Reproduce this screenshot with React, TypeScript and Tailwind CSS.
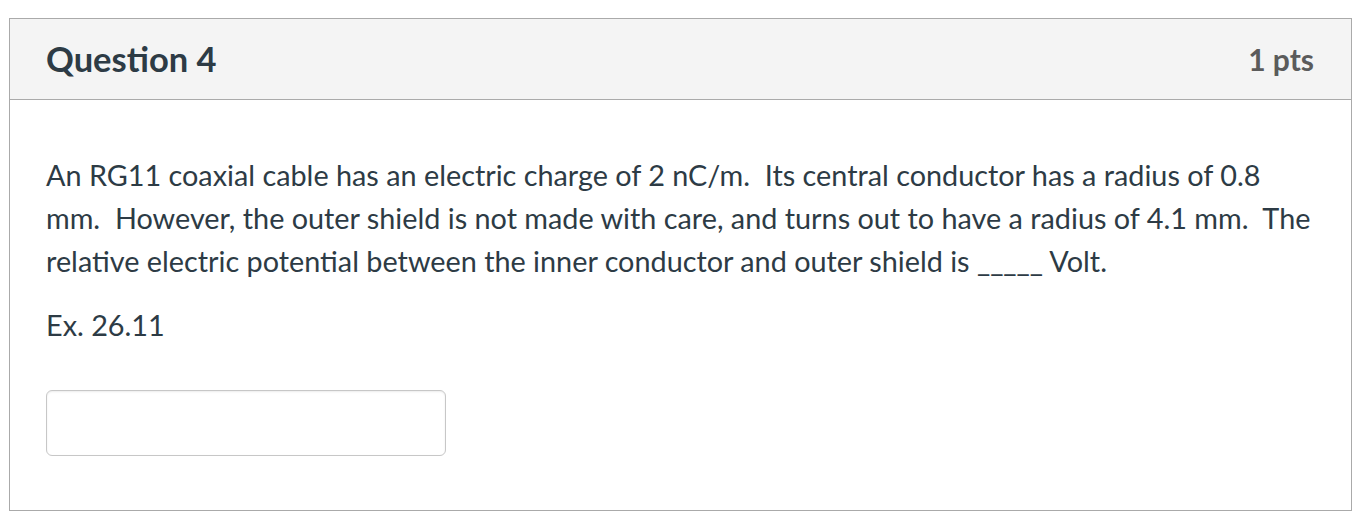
export default function App() {
  return (
    <div className="min-h-screen bg-white pt-[18px] pl-[9px] font-['Lato','Noto_Sans',sans-serif] text-[#2d3b45]">
      <div className="w-[1343px] border border-[#aaaaaa] bg-white">
        {/* Header */}
        <div className="flex h-[81px] items-center justify-between border-b border-[#aaaaaa] bg-[#f4f4f4] pl-[36px] pr-[37px]">
          <h2 className="text-[34.5px] font-bold leading-none">Question 4</h2>
          <div className="text-[30px] font-bold leading-none text-[#5b5b5b]">1 pts</div>
        </div>

        {/* Body */}
        <div className="px-[36px] pt-[54px] pb-[54px] text-[28.8px] leading-[43.2px]">
          <p>
            An RG11 coaxial cable has an electric charge of 2 nC/m.{'\u00a0'} Its central conductor has a radius of 0.8 mm.{'\u00a0'} However, the outer shield is not made with care, and turns out to have a radius of 4.1 mm.{'\u00a0'} The relative electric potential between the inner conductor and outer shield is _____ Volt.
          </p>
          <p className="mt-[20px]">Ex. 26.11</p>

          <div className="mt-[43px] flex">
            <input
              type="text"
              className="h-[66px] w-[400px] rounded-[6px] border border-[#c7c7c7] bg-white px-3 shadow-[inset_0_1px_2px_rgba(0,0,0,0.08)] outline-none"
            />
          </div>
        </div>
      </div>
    </div>
  );
}
